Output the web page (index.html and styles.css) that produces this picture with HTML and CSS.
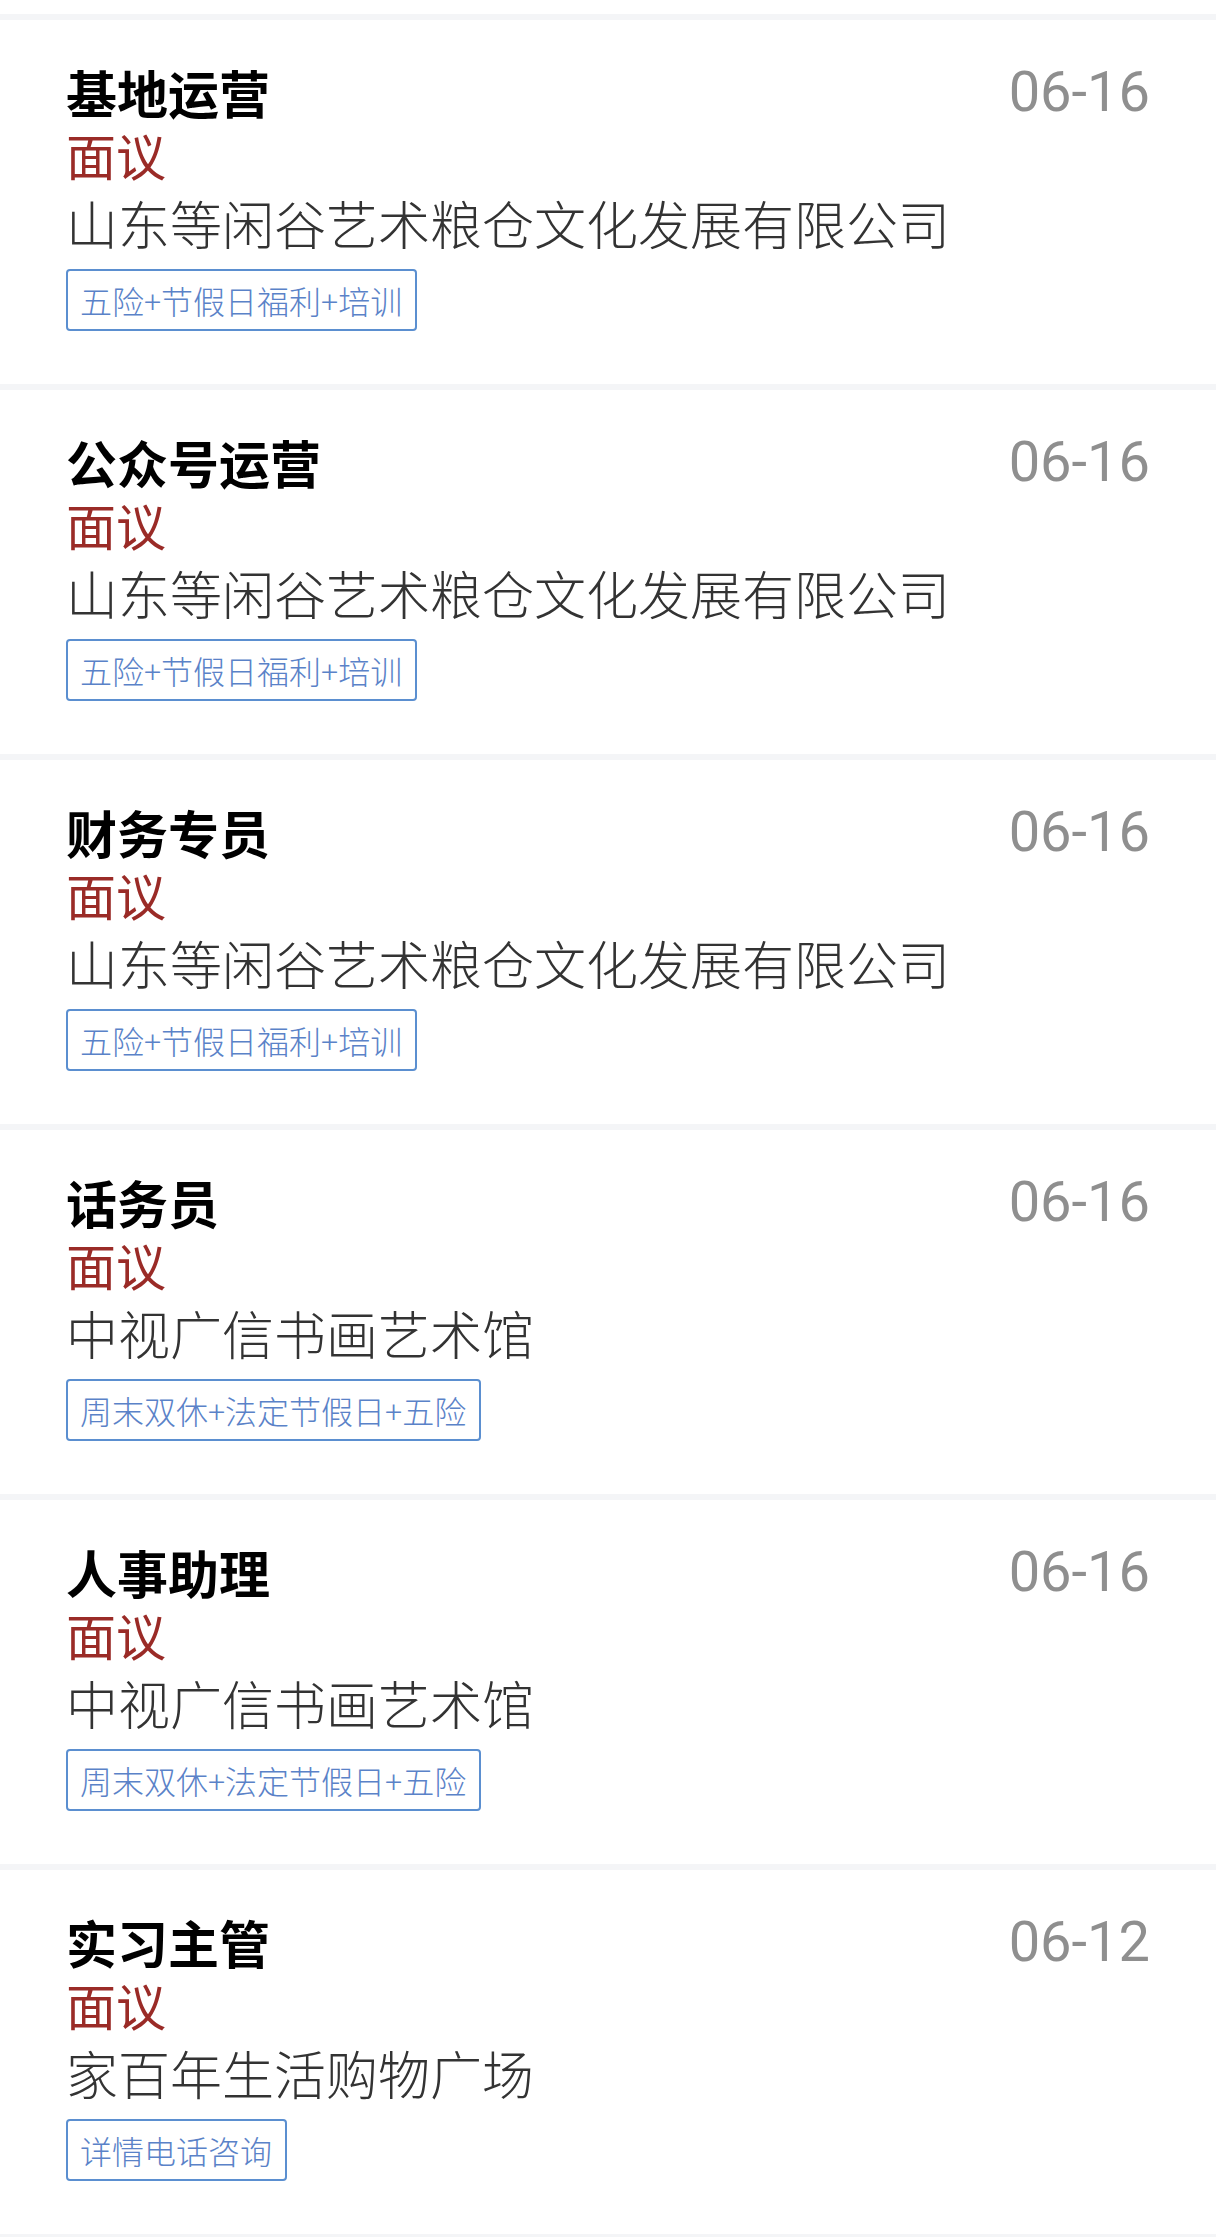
FILE: index.html
```html
<!DOCTYPE html>
<html lang="zh-CN">
<head>
    <meta charset="UTF-8">
    <meta name="viewport" content="width=device-width, initial-scale=1.0">
    <title>招聘信息</title>
    <link rel="stylesheet" href="styles.css">
</head>
<body>
    <div class="job-list">
        <div class="job">
            <div class="job-head">
                <span class="job-title">基地运营</span>
                <span class="job-date">06-16</span>
            </div>
            <div class="job-salary">面议</div>
            <div class="job-company">山东等闲谷艺术粮仓文化发展有限公司</div>
            <span class="job-tag">五险+节假日福利+培训</span>
        </div>

        <div class="job">
            <div class="job-head">
                <span class="job-title">公众号运营</span>
                <span class="job-date">06-16</span>
            </div>
            <div class="job-salary">面议</div>
            <div class="job-company">山东等闲谷艺术粮仓文化发展有限公司</div>
            <span class="job-tag">五险+节假日福利+培训</span>
        </div>

        <div class="job">
            <div class="job-head">
                <span class="job-title">财务专员</span>
                <span class="job-date">06-16</span>
            </div>
            <div class="job-salary">面议</div>
            <div class="job-company">山东等闲谷艺术粮仓文化发展有限公司</div>
            <span class="job-tag">五险+节假日福利+培训</span>
        </div>

        <div class="job">
            <div class="job-head">
                <span class="job-title">话务员</span>
                <span class="job-date">06-16</span>
            </div>
            <div class="job-salary">面议</div>
            <div class="job-company">中视广信书画艺术馆</div>
            <span class="job-tag">周末双休+法定节假日+五险</span>
        </div>

        <div class="job">
            <div class="job-head">
                <span class="job-title">人事助理</span>
                <span class="job-date">06-16</span>
            </div>
            <div class="job-salary">面议</div>
            <div class="job-company">中视广信书画艺术馆</div>
            <span class="job-tag">周末双休+法定节假日+五险</span>
        </div>

        <div class="job">
            <div class="job-head">
                <span class="job-title">实习主管</span>
                <span class="job-date">06-12</span>
            </div>
            <div class="job-salary">面议</div>
            <div class="job-company">家百年生活购物广场</div>
            <span class="job-tag">详情电话咨询</span>
        </div>
    </div>
</body>
</html>
```

FILE: styles.css
```css
body {
    font-family: "Noto Sans CJK SC", "Noto Sans", sans-serif;
    margin: 0;
    padding: 0;
    background-color: #fff;
    color: #333;
}

.job-list {
    padding-top: 14px;
}

/* each card is 364px of white plus a 6px grey divider on top */
.job {
    display: flex;
    flex-direction: column;
    align-items: flex-start;
    height: 370px;
    padding: 41px 66px 0;
    box-sizing: border-box;
    border-top: 6px solid #f4f5f7;
    background-color: #fff;
}

.job:last-child {
    height: 376px;
    border-bottom: 6px solid #f4f5f7;
}

.job-head {
    display: flex;
    justify-content: space-between;
    align-items: center;
    width: 100%;
    height: 62px;
}

.job-title {
    font-size: 51px;
    font-weight: bold;
    line-height: 62px;
    color: #000;
}

.job-date {
    font-family: Roboto, "Noto Sans", sans-serif;
    font-size: 56px;
    line-height: 62px;
    color: #8f8f8f;
}

.job-salary {
    font-size: 50px;
    line-height: 62px;
    color: #9a2b27;
}

.job-company {
    font-family: "Noto Sans CJK SC Light", "Noto Sans CJK SC", sans-serif;
    font-size: 52px;
    font-weight: 300;
    line-height: 76px;
    color: #333;
}

.job-tag {
    margin-top: 8px;
    padding: 0 13px 0 12px;
    border: 2px solid #5b8fd0;
    border-radius: 4px;
    font-family: "Noto Sans CJK SC Light", "Noto Sans CJK SC", sans-serif;
    font-size: 32px;
    font-weight: 300;
    line-height: 58px;
    color: #5a82c8;
}
```
